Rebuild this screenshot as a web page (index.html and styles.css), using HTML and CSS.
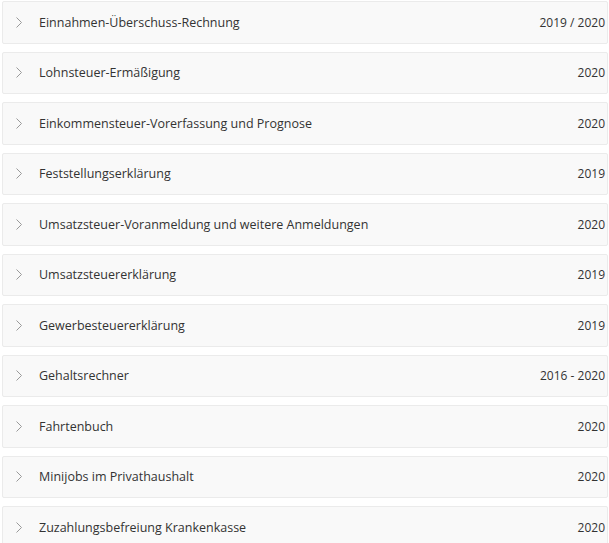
FILE: index.html
```html
<!DOCTYPE html>
<html lang="de">
<head>
    <meta charset="UTF-8">
    <title>Rechner</title>
    <link rel="stylesheet" href="styles.css">
</head>
<body>
    <div class="list">
        <div class="item"><svg class="chevron" viewBox="0 0 6 11"><path d="M0.5 0.5 L5.5 5.5 L0.5 10.5"/></svg><span class="title">Einnahmen-Überschuss-Rechnung</span><span class="year">2019 / 2020</span></div>
        <div class="item"><svg class="chevron" viewBox="0 0 6 11"><path d="M0.5 0.5 L5.5 5.5 L0.5 10.5"/></svg><span class="title">Lohnsteuer-Ermäßigung</span><span class="year">2020</span></div>
        <div class="item"><svg class="chevron" viewBox="0 0 6 11"><path d="M0.5 0.5 L5.5 5.5 L0.5 10.5"/></svg><span class="title">Einkommensteuer-Vorerfassung und Prognose</span><span class="year">2020</span></div>
        <div class="item"><svg class="chevron" viewBox="0 0 6 11"><path d="M0.5 0.5 L5.5 5.5 L0.5 10.5"/></svg><span class="title">Feststellungserklärung</span><span class="year">2019</span></div>
        <div class="item"><svg class="chevron" viewBox="0 0 6 11"><path d="M0.5 0.5 L5.5 5.5 L0.5 10.5"/></svg><span class="title">Umsatzsteuer-Voranmeldung und weitere Anmeldungen</span><span class="year">2020</span></div>
        <div class="item"><svg class="chevron" viewBox="0 0 6 11"><path d="M0.5 0.5 L5.5 5.5 L0.5 10.5"/></svg><span class="title">Umsatzsteuererklärung</span><span class="year">2019</span></div>
        <div class="item"><svg class="chevron" viewBox="0 0 6 11"><path d="M0.5 0.5 L5.5 5.5 L0.5 10.5"/></svg><span class="title">Gewerbesteuererklärung</span><span class="year">2019</span></div>
        <div class="item"><svg class="chevron" viewBox="0 0 6 11"><path d="M0.5 0.5 L5.5 5.5 L0.5 10.5"/></svg><span class="title">Gehaltsrechner</span><span class="year">2016 - 2020</span></div>
        <div class="item"><svg class="chevron" viewBox="0 0 6 11"><path d="M0.5 0.5 L5.5 5.5 L0.5 10.5"/></svg><span class="title">Fahrtenbuch</span><span class="year">2020</span></div>
        <div class="item"><svg class="chevron" viewBox="0 0 6 11"><path d="M0.5 0.5 L5.5 5.5 L0.5 10.5"/></svg><span class="title">Minijobs im Privathaushalt</span><span class="year">2020</span></div>
        <div class="item"><svg class="chevron" viewBox="0 0 6 11"><path d="M0.5 0.5 L5.5 5.5 L0.5 10.5"/></svg><span class="title">Zuzahlungsbefreiung Krankenkasse</span><span class="year">2020</span></div>
    </div>
</body>
</html>
```

FILE: styles.css
```css
html, body {
    margin: 0;
    padding: 0;
    background: #fff;
    font-family: "Open Sans", "Noto Sans", sans-serif;
    color: #333;
}

.list {
    display: flex;
    flex-direction: column;
    gap: 8px;
    padding: 1px 1px 0 2px;
}

.item {
    display: flex;
    align-items: center;
    height: 42.5px;
    box-sizing: border-box;
    background-color: #f9f9f9;
    border: 1px solid #ebebeb;
    border-radius: 2px;
    padding: 0 2px 0 13px;
    font-size: 12.5px;
}

.chevron {
    width: 6px;
    height: 11px;
    margin-right: 17px;
    fill: none;
    stroke: #999;
    stroke-width: 1;
}

.title {
    flex: 1;
}

.year {
    font-size: 12px;
}
```
